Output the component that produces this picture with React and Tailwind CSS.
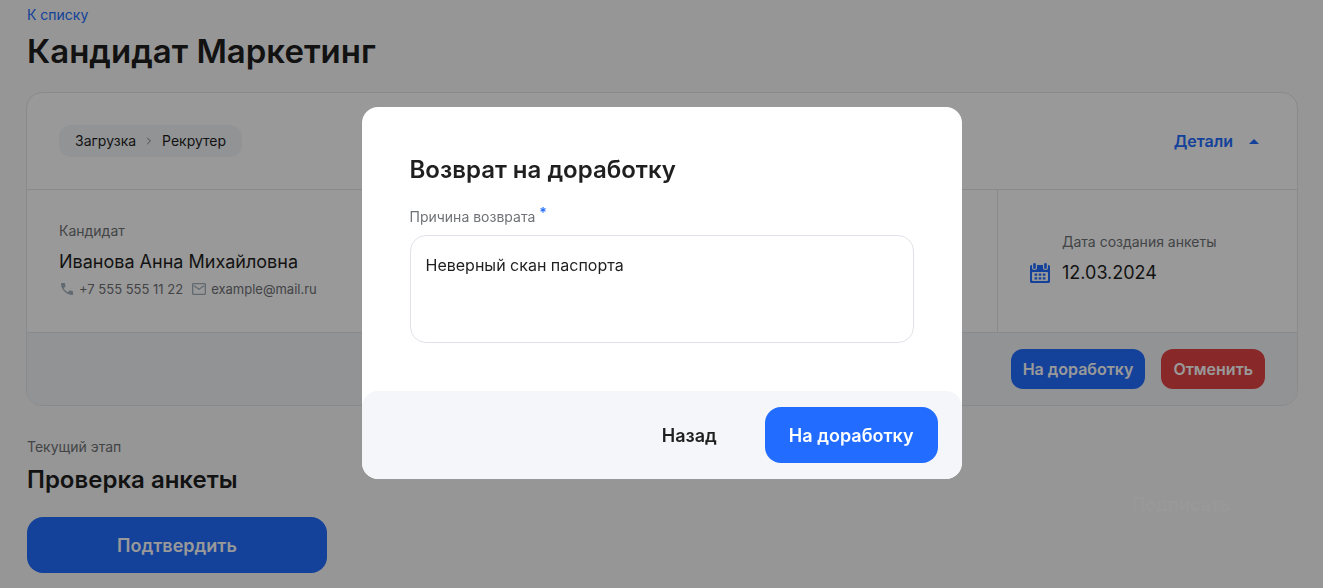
import React from "react";

const primary =
  "cursor-pointer rounded-2xl bg-[#226dff] text-lg font-semibold text-white";

function PhoneIcon() {
  return (
    <svg viewBox="0 0 24 24" className="size-4" fill="#a3b1bd" aria-hidden="true">
      <path d="M19.95 21q-3.125 0-6.175-1.363t-5.55-3.862-3.862-5.55T3 4.05q0-.45.3-.75t.75-.3H8.1q.35 0 .625.238t.325.562l.65 3.5q.05.4-.025.675T9.4 8.45L6.975 10.9q.5.925 1.187 1.787t1.513 1.663q.775.775 1.625 1.438T13.1 17l2.35-2.35q.225-.225.588-.337t.712-.063l3.45.7q.35.1.575.363T21 15.9v4.05q0 .45-.3.75t-.75.3Z" />
    </svg>
  );
}

function MailIcon() {
  return (
    <svg viewBox="0 0 16 16" className="size-4" fill="none" stroke="#a3b1bd" strokeWidth="1.3" aria-hidden="true">
      <rect x="1.65" y="2.65" width="12.7" height="10.7" rx="0.8" />
      <path d="M3.3 5 8 8.3 12.7 5" strokeLinecap="round" />
    </svg>
  );
}

function CalendarIcon() {
  return (
    <svg viewBox="0 0 20 20" className="size-5 shrink-0" aria-hidden="true">
      <path
        fill="#226dff"
        fillRule="evenodd"
        d="M1.5 2H2V4.5Q2 7 4.5 7T7 4.5V2H13V4.5Q13 7 15.5 7T18 4.5V2H18.5Q20 2 20 3.5V18.5Q20 20 18.5 20H1.5Q0 20 0 18.5V3.5Q0 2 1.5 2ZM3 9Q2 9 2 10V17Q2 18 3 18H17Q18 18 18 17V10Q18 9 17 9Z"
      />
      <g fill="#226dff">
        <rect x="3.2" y="0" width="2.6" height="6" rx="1.3" />
        <rect x="14.2" y="0" width="2.6" height="6" rx="1.3" />
        <path d="M4.6 10.4h2.6v2.4H4.6zM8.7 10.4h2.6v2.4H8.7zM12.8 10.4h2.6v2.4h-2.6zM4.6 14.2h2.6v2.4H4.6zM8.7 14.2h2.6v2.4H8.7zM12.8 14.2h2.6v2.4h-2.6z" />
      </g>
    </svg>
  );
}

function CandidateCard() {
  return (
    <section className="mt-4 overflow-hidden rounded-2xl border border-[#e4e6ea] bg-white">
      <div className="flex h-24 items-center justify-between px-8">
        <div className="flex h-8 items-center gap-2 rounded-xl bg-[#f4f6f9] px-4 text-sm">
          <span>Загрузка</span>
          <svg viewBox="0 0 10 10" className="size-2.5" fill="none" stroke="#77797c" aria-hidden="true">
            <path d="M3.2 1.8 6.4 5 3.2 8.2" />
          </svg>
          <span>Рекрутер</span>
        </div>
        <button type="button" className="flex cursor-pointer items-center gap-4 pr-1.5 text-base font-semibold text-[#226dff]">
          Детали
          <svg viewBox="0 0 10 5" className="h-[5px] w-2.5" fill="#226dff" aria-hidden="true">
            <path d="M0 5 5 0l5 5Z" />
          </svg>
        </button>
      </div>

      <div className="flex border-y border-[#e4e6ea]">
        <div className="flex h-[142px] flex-1 flex-col justify-center px-8 pb-0.5">
          <p className="text-sm leading-5 text-[#6f7276]">Кандидат</p>
          <p className="mt-2 text-lg leading-[26px]">Иванова Анна Михайловна</p>
          <div className="mt-1 flex items-center gap-2 text-[13px] leading-5 text-[#6f7276]">
            <span className="flex items-center gap-1">
              <PhoneIcon />
              +7 555 555 11 22
            </span>
            <span className="flex items-center gap-1">
              <MailIcon />
              example@mail.ru
            </span>
          </div>
        </div>
        <div className="flex w-[300px] flex-col justify-center border-l border-[#e4e6ea] px-8 pb-1">
          <p className="pl-8 text-sm leading-5 text-[#6f7276]">Дата создания анкеты</p>
          <p className="mt-2 flex items-center gap-3 text-lg leading-[26px]">
            <CalendarIcon />
            12.03.2024
          </p>
        </div>
      </div>

      <div className="flex items-center justify-end gap-4 bg-[#f4f6f9] px-8 py-4 font-semibold text-white">
        <button type="button" className="h-10 cursor-pointer rounded-xl bg-[#226dff] px-3">
          На доработку
        </button>
        <button type="button" className="h-10 cursor-pointer rounded-xl bg-[#e44345] px-3">
          Отменить
        </button>
      </div>
    </section>
  );
}

function ReturnDialog() {
  return (
    <div className="fixed inset-0 flex items-center justify-center bg-black/40 pb-0.5">
      <div
        role="dialog"
        aria-modal="true"
        aria-labelledby="return-title"
        className="w-[600px] max-w-full overflow-hidden rounded-2xl bg-white"
      >
        <div className="p-12">
          <h2 id="return-title" className="text-2xl leading-[30px] font-semibold">
            Возврат на доработку
          </h2>
          <label htmlFor="reason" className="mt-[22px] flex gap-1 text-sm leading-5 text-[#6f7276]">
            Причина возврата
            <span className="leading-3 font-semibold text-[#226dff]" aria-hidden="true">*</span>
          </label>
          <textarea
            id="reason"
            required
            defaultValue="Неверный скан паспорта"
            className="mt-2 block h-[108px] w-full resize-none rounded-2xl border border-[#e1e2e9] px-[15px] py-[17px] text-base leading-6 outline-none"
          />
        </div>
        <div className="flex items-center justify-end gap-6 rounded-2xl bg-[#f4f6f9] px-6 py-4">
          <button type="button" className="h-14 cursor-pointer rounded-2xl px-6 pt-0.5 text-lg font-semibold">
            Назад
          </button>
          <button type="button" className={primary + " h-14 px-6 pt-0.5"}>
            На доработку
          </button>
        </div>
      </div>
    </div>
  );
}

export default function App() {
  return (
    <div className="min-h-screen bg-[#fafafa] font-['Inter',sans-serif] text-[#1f1f1f]">
      <main className="pt-[5px] pr-[25px] pb-3 pl-[26px]">
        <header className="px-px pb-0.5">
          <a href="#list" className="block w-fit text-sm leading-5 text-[#226dff]">
            К списку
          </a>
          <h1 className="mt-1 text-[33px] leading-[45px] font-semibold">Кандидат Маркетинг</h1>
        </header>

        <CandidateCard />

        <section className="mt-[31px] flex items-center justify-between px-px">
          <div>
            <p className="text-sm leading-5 text-[#6f7276]">Текущий этап</p>
            <h2 className="mt-2 text-2xl leading-[30px] font-semibold">Проверка анкеты</h2>
            <button type="button" className={primary + " mt-[22px] h-14 w-[300px] pt-0.5"}>
              Подтвердить
            </button>
          </div>
          <button type="button" disabled className="h-14 w-[232px] rounded-2xl text-lg font-semibold text-white">
            Подписать
          </button>
        </section>
      </main>
      <ReturnDialog />
    </div>
  );
}
